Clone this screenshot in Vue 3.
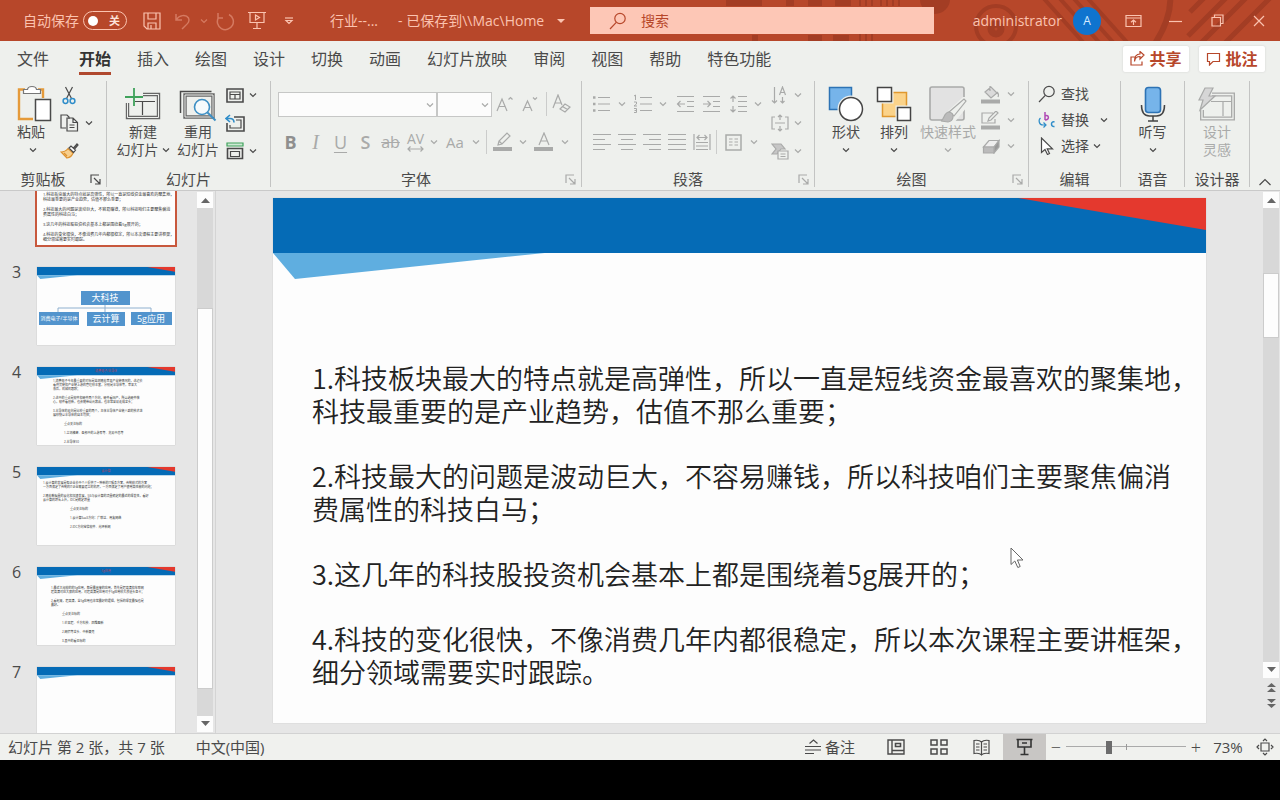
<script setup>
import { h, ref } from 'vue'

const shapes = {
  save: [18, 18, '<path d="M1 1h16v16H4l-3-3z M5 1v6h8V1 M5 17v-6h8v6 M8 13v4"/>'],
  undo: [18, 18, '<path d="M2 2v6h6 M2 8C5 3 12 2 14.500 6c2 4-1.500 6-6.500 11" stroke-width="1.500"/>'],
  redo: [20, 20, '<path d="M3 2v5h5 M3.500 6.500A8 8 0 1 0 14 3.500" stroke-width="1.500"/>'],
  present: [20, 19, '<path d="M1 1.500h18 M3 1.500v10h14v-10 M10 11.500v6 M6 17.500h8"/><path d="M8.500 4l4 2.500-4 2.500z"/>'],
  more: [10, 8, '<path d="M1 1h8"/><path d="M2 3.500l3 3 3-3z"/>'],
  caret: [10, 6, '<path d="M1 1h8L5 5z" fill="currentColor" stroke="none"/>'],
  chev: [8, 6, '<path d="M1 1.500l3 3 3-3"/>'],
  up: [14, 8, '<path d="M1.500 7L7 1.500 12.500 7"/>'],
  search: [18, 18, '<circle cx="11" cy="6.500" r="5.200"/><path d="M7.300 10.400L1 17"/>'],
  ribbonOpts: [17, 14, '<path d="M1 1.500h15v11H1z M1 4h15 M8.500 11V6 M6 8.200L8.500 6 11 8.200"/>'],
  min: [13, 12, '<path d="M0 6.500h13"/>'],
  restore: [13, 13, '<path d="M1 3.500h8.500V12H1z M3.500 3.500V1H12v8.500H9.500"/>'],
  close: [12, 12, '<path d="M1 1l10 10M11 1L1 11"/>'],
  share: [15, 15, '<path d="M5 6H1v8h11v-3.500 M4.500 10.500C5 7 7 5.500 10 5.500V8l4-4-4-3.500V3C6.500 3 4.500 6 4.500 10.500z"/>'],
  comment: [15, 14, '<path d="M1.500 1.500h12v8H7l-3.500 3.500V9.500h-2z"/>'],
  paste: [36, 38, '<path d="M8 4.500H2V34h14 M21 4.500h5V13" stroke="#e59a3a" stroke-width="2.400"/><path d="M6.500 8.500V4.500h4c.500-4 8.500-4 9 0h4v4z" fill="#fff" stroke="#777"/><path d="M18.500 14.500h15v21h-15z" fill="#fff" stroke="#4a4a4a" stroke-width="1.500"/>'],
  cut: [14, 19, '<path d="M3.500 1l6 11.500M10.500 1l-6 11.500"/><g stroke="#2f8dc9" stroke-width="1.500"><circle cx="3.500" cy="15" r="2.400"/><circle cx="10.500" cy="15" r="2.400"/></g>'],
  copy: [19, 18, '<path d="M6 14H1V1h6l2 2v2"/><path d="M7 4h6l4.500 4.500V17H7z M13 4v4.500h4.500 M9.500 11h5 M9.500 13.500h5"/>'],
  brush: [19, 16, '<path d="M1 9c3 0 5-1 7-3.500l5 4.500c-1 3-3 4.500-6 5z" fill="#f7cf8e" stroke="#dd9230"/><path d="M9 5l2-2 4.500 4-2 2.500z M13.500 5l3.500-4 1 1-3.500 4" fill="#fff"/><path d="M4 10l3 3" stroke="#dd9230"/>'],
  newSlide: [38, 36, '<path d="M19 8.500h15.500v23h-31V17" stroke="#666" stroke-width="3.400"/><path d="M19 8.500h15.500v23h-31V17" stroke="#eef0ed" stroke-width="1"/><path d="M11 15.500h20 M18.500 15.500V29"/><path d="M10 2v18 M1 11h18" stroke="#3fa25b" stroke-width="1.800"/>'],
  reuse: [38, 36, '<path d="M1.500 27V5.500h31" stroke-width="1.500"/><path d="M6 9h28v22H6z" stroke="#666" stroke-width="3.400"/><path d="M6 9h28v22H6z" stroke="#eef0ed" stroke-width="1"/><circle cx="23" cy="21" r="7.500" fill="#f5fafc" stroke="#3d8fc4" stroke-width="1.600"/><path d="M28.500 26.500l8 8" stroke="#3d8fc4" stroke-width="2"/>'],
  layout: [18, 15, '<path d="M1 1h16v13H1z" stroke-width="1.600"/><path d="M4 4h10v7H4z M4 6.500h10 M9 6.500V11"/>'],
  reset: [20, 18, '<path d="M9 3h10v14H2V9" stroke-width="1.600"/><path d="M11 6h5v8H5v-3"/><path d="M5 1L1 4.500 5 8 M1 4.500h4c3 0 4 2 4 4" stroke="#2f8dc9" stroke-width="1.600"/>'],
  section: [18, 18, '<path d="M1 1h16v3H1z" stroke="#3fa25b" fill="#cfe9d5"/><path d="M1.500 6.500h15v10h-15z" stroke-width="1.600"/><path d="M4.500 9.500h9v5h-9z"/>'],
  clear: [20, 20, '<path d="M1 14L6 1l4 10 M3 9h6"/><path d="M8 15l5-5 5 3-5 5z M10.500 12.500l5 3" fill="#eef0ed"/>'],
  grow: [17, 16, '<path d="M1 15L6 3l5 12 M3 10.500h6 M12.500 3.500l2-2 2 2"/>'],
  shrink: [16, 16, '<path d="M1 15L5.500 5l4.500 10 M2.700 11.500h5.600 M11 1.500l2 2 2-2"/>'],
  tracking: [17, 6, '<path d="M1 3h15 M3.500 .5L1 3l2.500 2.500 M13.500 .5L16 3l-2.500 2.500"/>'],
  pen: [20, 20, '<path d="M5 13l1-4 8-8 3 3-8 8z M6 9l3 3"/><path d="M0 17h19" stroke-width="4"/>'],
  fontColor: [20, 20, '<path d="M5 13L10 1l5 12 M6.800 9h6.400"/><path d="M0 17h19" stroke-width="4"/>'],
  bullets: [19, 18, '<path d="M6 2.500h12M6 9h12M6 15.500h12"/><path d="M1 2.500h2.500M1 9h2.500M1 15.500h2.500" stroke-width="2.600"/>'],
  numbers: [19, 20, '<path d="M7 3.500h12M7 10h12M7 16.500h12"/><path d="M1 2l1.500-1v5 M1 8h2.500v2L1 12h3 M1 14.500h2.500v4H1 M1.500 16.500h2" stroke-width="1"/>'],
  outdent: [19, 18, '<path d="M1 1.500h17M11 6.500h7M11 11.500h7M1 16.500h17 M9 9H1.500 M4.500 6L1.500 9l3 3"/>'],
  indent: [19, 18, '<path d="M1 1.500h17M11 6.500h7M11 11.500h7M1 16.500h17 M1 9h7.500 M5.500 6l3 3-3 3"/>'],
  spacing: [19, 18, '<path d="M9 1.500h9M9 6.500h9M9 11.500h9M9 16.500h9 M4 1v6 M1.500 3.500L4 1l2.500 2.500 M4 11v6 M1.500 14.500L4 17l2.500-2.500"/>'],
  left: [18, 18, '<path d="M0 1.500h18M0 6.500h12M0 11.500h18M0 16.500h12"/>'],
  center: [18, 18, '<path d="M0 1.500h18M3 6.500h12M0 11.500h18M3 16.500h12"/>'],
  right: [18, 18, '<path d="M0 1.500h18M6 6.500h12M0 11.500h18M6 16.500h12"/>'],
  justify: [18, 18, '<path d="M0 1.500h18M0 6.500h18M0 11.500h18M0 16.500h18"/>'],
  distribute: [18, 18, '<path d="M1 1v16M17 1v16M3 9.500h12M3 13h12M3 16.500h12 M4 4.500h10 M6.500 2L4 4.500 6.500 7 M11.500 2L14 4.500 11.500 7"/>'],
  columns: [17, 17, '<path d="M1 1h15v15H1z" stroke-width="1.500"/><path d="M4 5h3.500M4 8h3.500M4 11h3.500M9.500 5H13M9.500 8H13M9.500 11H13"/>'],
  textDir: [18, 18, '<path d="M3.500 1v16 M1 14.500L3.500 17 6 14.500 M8.500 9l3-8 3 8 M9.500 6.500h4 M11.500 11v6 M9.500 15l2 2 2-2"/>'],
  vAlign: [18, 18, '<path d="M4 3H1v12h3 M14 3h3v12h-3 M4 9h10 M9 1v5 M7 3l2-2 2 2 M9 12v5 M7 15l2 2 2-2"/>'],
  smart: [18, 17, '<path d="M1 1h9l4 5h-4l-4 5H1l4-5z" fill="#c6c6c6"/><path d="M7 8h10v8H7z M9.500 11h5M9.500 13.500h5" fill="#eef0ed"/>'],
  shapes: [36, 36, '<path d="M1.500 1.500h22v22h-22z" fill="#76b4ea" stroke="#2d73b5" stroke-width="1.500"/><circle cx="23" cy="23" r="13.500" fill="#eef0ed" stroke="none"/><circle cx="23" cy="23" r="11.500" fill="#fff" stroke="#444" stroke-width="1.500"/>'],
  arrange: [36, 36, '<path d="M6.500 6.500h24v24h-24z" fill="#fbd38a" stroke="#e0982f" stroke-width="1.500"/><g stroke="#eef0ed" stroke-width="4"><path d="M1.500 1.500h14v14h-14z M21.500 21.500h13v13h-13z"/></g><g fill="#fff" stroke="#444" stroke-width="1.500"><path d="M1.500 1.500h14v14h-14z M21.500 21.500h13v13h-13z"/></g>'],
  quick: [38, 38, '<path d="M3 2h30q2 0 2 2v29q0 2-2 2H3q-2 0-2-2V4q0-2 2-2z" stroke-width="1.600" fill="#e2e2e2"/><path d="M11 38h14l13-16V12h-4L18 27z" fill="#eef0ed" stroke="none"/><path d="M20 27L35 14l2 2-12 15z" fill="#eef0ed"/><path d="M12 36c3-1 3-9 8-9 6 1 5 9-1 10z" fill="#bbb"/>'],
  fill: [20, 19, '<path d="M4 7l6-5 6 6-6 5z M9 6V1 M16 7c2 2 2 3 1 5" fill="#dadada"/><path d="M0 16.500h19" stroke-width="4"/>'],
  outline: [20, 19, '<path d="M12 2H1v10h13V8 M7 10l1-3 7-7 2 2-7 7z"/><path d="M0 16.500h19" stroke-width="4"/>'],
  effect: [18, 15, '<path d="M1.500 8L7 1.500h10L12 8z" fill="#eee"/><path d="M12 8l5-6.500V8l-5 6z" fill="#999"/><path d="M1.500 8H12v6H1.500z" fill="#bbb"/>'],
  replace: [18, 18, '<path d="M7 1v8 M7 5c4-2 5 4 0 4" stroke="#b04ab5" stroke-width="1.500"/><path d="M16.500 11c-4-1.500-4 5.500 0 4.500" stroke="#2f8dc9" stroke-width="1.500"/><path d="M2.500 7C0 9 1 14 5 14H8 M5.500 11.500L8 14l-2.500 2.500" stroke="#2f8dc9"/>'],
  pointer: [13, 18, '<path d="M1 1v14.500l3.500-3 2.500 5 2-1-2.300-4.700H12z" fill="#fff"/>'],
  mic: [26, 36, '<rect x="5.500" y="1.500" width="15" height="25" rx="3" fill="#76b4ea" stroke="#2d73b5" stroke-width="1.600"/><path d="M1.500 19c0 7 3 11 8 11h7c5 0 8-4 8-11 M13 30v5 M8 35h10" stroke="#444" stroke-width="1.500"/>'],
  designer: [38, 34, '<path d="M14 7.500h21v24H4V23" stroke-width="4"/><path d="M14 7.500h21v24H4V23" stroke="#eef0ed" stroke-width="1.300"/><path d="M13 14.500h20 M25 14.500V29"/><path d="M7 1h8l-4 8h6L2 23l3-10H1z" fill="#d6d6d6"/>'],
  launcher: [11, 11, '<path d="M1 9V1h8 M4 4l5.500 5.500 M10 5v5H5"/>'],
  notes: [18, 16, '<path d="M5.500 4.500L9.500 1l4 3.500 M1 7.500h16 M1 11h16 M1 14.500h9"/>'],
  normal: [18, 16, '<path d="M1 1h16v14H1z M5 1v14 M5 11.500h12" stroke-width="1.400"/><path d="M8.500 4.500h5v3h-5z" stroke-width="1.600"/>'],
  sorter: [18, 16, '<path d="M1 1h6v5H1z M11 1h6v5h-6z M1 10h6v5H1z M11 10h6v5h-6z" stroke-width="1.500"/>'],
  reading: [17, 17, '<path d="M8.500 3C6.500 1 4 1 1 1.500v13c3-.5 6-.5 7.500 1.500 1.500-2 4.500-2 7.500-1.500v-13c-3-.5-5.500-.5-7.500 1.500zV16 M3 5h3.500M3 8h3.500M3 11h3.500M10.500 5H14M10.500 8H14M10.500 11H14"/>'],
  show: [17, 18, '<path d="M.5 1.500h16 M2 1.500V9h13V1.500 M8.500 9v7.500 M4.500 16.500h8 M6 5h5" stroke-width="1.600"/>'],
  fit: [18, 18, '<path d="M5 5h8v8H5z M7 3l2-2 2 2 M7 15l2 2 2-2 M3 7L1 9l2 2 M15 7l2 2-2 2"/>'],
  triUp: [9, 6, '<path d="M0 6l4.500-5L9 6z" fill="currentColor" stroke="none"/>'],
  triDown: [9, 6, '<path d="M0 0l4.500 5L9 0z" fill="currentColor" stroke="none"/>'],
  dblUp: [9, 10, '<path d="M0 5l4.500-4L9 5z M0 10l4.500-4L9 10z" fill="currentColor" stroke="none"/>'],
  dblDown: [9, 10, '<path d="M0 0l4.500 4L9 0z M0 5l4.500 4L9 5z" fill="currentColor" stroke="none"/>']
}

const Icon = (props) => {
  const [w, hgt, body] = shapes[props.n]
  return h('svg', {
    width: w, height: hgt, viewBox: `0 0 ${w} ${hgt}`, fill: 'none',
    stroke: 'currentColor', 'stroke-width': 1.2, 'aria-hidden': 'true', innerHTML: body
  })
}
Icon.props = ['n']

const Deco = () => h('svg', {
  viewBox: '0 0 934 525', width: '100%', 'aria-hidden': 'true',
  innerHTML: '<path d="M0 0h934v55H0z" fill="#056bb6"/><path d="M746 0h188v32z" fill="#e4392e"/><path d="M0 55h272L22 81z" fill="#5faee0"/>'
})

const tabs = ['文件', '开始', '插入', '绘图', '设计', '切换', '动画', '幻灯片放映', '审阅', '视图', '帮助', '特色功能']
const zoom = ref(35)

const body = [
  ['1.科技板块最大的特点就是高弹性，所以一直是短线资金最喜欢的聚集地，', '科技最重要的是产业趋势，估值不那么重要；'],
  ['2.科技最大的问题是波动巨大，不容易赚钱，所以科技咱们主要聚焦偏消', '费属性的科技白马；'],
  ['3.这几年的科技股投资机会基本上都是围绕着5g展开的；'],
  ['4.科技的变化很快，不像消费几年内都很稳定，所以本次课程主要讲框架，', '细分领域需要实时跟踪。']
]

const slides = [
  { no: 2, kind: 'current', paras: body },
  { no: 3, kind: 'org', paras: [] },
  {
    no: 4, kind: 'four', title: '消费电子/半导体', paras: [
      ['1.消费电子今年最重要的对标是监测随着苹果产业链情况的，这边去', '看供货链和产业链上游的管理较丰富，分别是半导体等，苹果大', '涨后，机械机跟踪；'],
      ['2.这中的重点是软件和硬件两个方向，硬件看国产，所以选硬件核', '心，软件看创新，也会随带动元器品，也非常容易走成龙头；'],
      ['3.半导体的走向是比较重要的两个，主体半导体产业链人群的技术进', '展较快以半导体的自主可控；']
    ], sub: ['重点关注标的', '1.立讯精密、圣邦中的上游军等、兆易中芯等', '2.半导体50']
  },
  {
    no: 5, kind: 'five', title: '云计算', paras: [
      ['1.云计算的发展是帮企业去中个人提供了一种新的IT服务方案，传统模式的方案', '一方面满足了传统的IT企业需要建立的机房，一方面满足了用户使用高性能的问题；'],
      ['2.随着数据量的云化和加速发展，5G与云计算的流量确定的最近的爆发性，看好', '云计算的增长上升，IDC是确定增量']
    ], sub: ['重点关注标的', '1.云计算SaaS方向：广联达、用友网络', '2.IDC方向宝信软件、光环新网']
  },
  {
    no: 6, kind: 'six', title: '5g应用', paras: [
      ['1.最近大规模的的5g应用，都是最直接的应用，首先是超高清和车联网', '超高清对应大屏的应用，对超高清是应用对于5g应用较大渗透头显卡；'],
      ['2.看起来，超高清，全5g应用也非常最好的逻辑，包括的爆发最强也是', '最好。']
    ], sub: ['重点关注标的', '1.芒果超、千方科技、四维图新', '2.网宿等龙头、中新赛克', '3.其中的看见标的']
  },
  { no: 7, kind: 'blank', paras: [] }
]
</script>

<template>
  <div class="screen">
    <header class="titlebar">
      <svg class="pattern" width="600" height="41" viewBox="0 0 600 41" aria-hidden="true">
        <g fill="none" stroke="#a33d24">
          <path d="M46 3h36M106 3h8M128 3h14M155 3h16" stroke-width="6" />
          <path d="M180 0v6M186 0v6M192 0v6M201 0v6M207 0v6M213 0v6M219 0v6M180 34v7M186 34v7M192 34v7" stroke-width="2" />
          <path d="M72 38h6M128 38h14M153 38h16" stroke-width="6" />
          <circle cx="316" cy="26" r="20" stroke-width="4" />
          <circle cx="316" cy="29" r="5" stroke-width="7" />
          <path d="M358-8l52 58M374-8l52 58M388-8l52 58M402-8l52 58" stroke-width="4" />
          <path d="M490-8c2 18-4 36-18 56" stroke-width="6" />
          <path d="M528-6l-18 18M550-6l-42 42M570-6l-50 50M594-6l-50 50" stroke-width="5" />
        </g>
        <circle cx="255" cy="-1" r="15" fill="#a33d24" />
      </svg>
      <div class="tb-left">
        <label class="autosave">自动保存
          <span class="toggle"><input type="checkbox" aria-label="自动保存"><i></i>关</span>
        </label>
        <button class="w32" aria-label="保存"><Icon n="save" /></button>
        <button class="w30 dim" aria-label="撤消"><Icon n="undo" /></button>
        <button class="w12 dim" aria-label="撤消选项"><Icon n="chev" /></button>
        <button class="w30 dim" aria-label="重复"><Icon n="redo" /></button>
        <button class="w34" aria-label="从头开始"><Icon n="present" /></button>
        <button class="w30" aria-label="自定义快速访问工具栏"><Icon n="more" /></button>
        <span class="docname">行业--...</span>
        <button class="saved">-  已保存到\\Mac\Home <Icon n="caret" /></button>
      </div>
      <label class="searchbox"><Icon n="search" /><input type="text" placeholder="搜索" aria-label="搜索"></label>
      <div class="tb-right">
        <span>administrator</span>
        <button class="avatar">A</button>
        <button class="w42" aria-label="功能区显示选项"><Icon n="ribbonOpts" /></button>
        <button class="w42" aria-label="最小化"><Icon n="min" /></button>
        <button class="w42" aria-label="还原"><Icon n="restore" /></button>
        <button class="w42" aria-label="关闭"><Icon n="close" /></button>
      </div>
    </header>

    <nav class="tabs">
      <button v-for="t in tabs" :key="t" class="tab" :class="{ active: t === '开始', file: t === '文件' }">{{ t }}</button>
      <span class="grow"></span>
      <button class="action"><Icon n="share" />共享</button>
      <button class="action"><Icon n="comment" />批注</button>
    </nav>

    <section class="ribbon">
      <div class="group">
        <div class="gbody clip">
          <button class="big start w36"><Icon n="paste" /><span>粘贴</span><Icon n="chev" /></button>
          <div class="rows">
            <div><button class="w32" aria-label="剪切"><Icon n="cut" /></button></div>
            <div><button class="w32" aria-label="复制"><Icon n="copy" /></button><button class="w12" aria-label="复制选项"><Icon n="chev" /></button></div>
            <div><button class="w32" aria-label="格式刷"><Icon n="brush" /></button></div>
          </div>
        </div>
        <div class="glabel"><span>剪贴板</span><button class="launch" aria-label="剪贴板设置"><Icon n="launcher" /></button></div>
      </div>

      <div class="group">
        <div class="gbody slidesg">
          <button class="big w56"><Icon n="newSlide" /><span>新建</span><span class="inline">幻灯片 <Icon n="chev" /></span></button>
          <button class="big w54"><Icon n="reuse" /><span>重用</span><span>幻灯片</span></button>
          <div class="rows">
            <div><button class="w25" aria-label="版式"><Icon n="layout" /></button><button class="w12" aria-label="版式选项"><Icon n="chev" /></button></div>
            <div><button class="w25" aria-label="重置"><Icon n="reset" /></button></div>
            <div><button class="w25" aria-label="节"><Icon n="section" /></button><button class="w12" aria-label="节选项"><Icon n="chev" /></button></div>
          </div>
        </div>
        <div class="glabel"><span>幻灯片</span></div>
      </div>

      <div class="group">
        <div class="gbody fontg off">
          <div class="line">
            <label class="combo wide"><select disabled aria-label="字体"><option></option></select><Icon n="chev" /></label>
            <label class="combo"><select disabled aria-label="字号"><option></option></select><Icon n="chev" /></label>
            <button class="w25" aria-label="增大字号"><Icon n="grow" /></button>
            <button class="w25" aria-label="减小字号"><Icon n="shrink" /></button>
            <i class="sep"></i>
            <button class="w25" aria-label="清除格式"><Icon n="clear" /></button>
          </div>
          <div class="line">
            <button class="w25 t bold">B</button><button class="w25 t ital">I</button><button class="w25 t under">U</button>
            <button class="w25 t semi">S</button><button class="w25 t strike">ab</button>
            <button class="w25 av">AV<Icon n="tracking" /></button><button class="w12" aria-label="字符间距选项"><Icon n="chev" /></button>
            <button class="w30 aa">Aa</button><button class="w12" aria-label="大小写选项"><Icon n="chev" /></button>
            <i class="sep"></i>
            <button class="w28" aria-label="突出显示"><Icon n="pen" /></button><button class="w12" aria-label="突出显示选项"><Icon n="chev" /></button>
            <button class="w30" aria-label="字体颜色"><Icon n="fontColor" /></button><button class="w12" aria-label="字体颜色选项"><Icon n="chev" /></button>
          </div>
        </div>
        <div class="glabel off"><span>字体</span><button class="launch" aria-label="字体设置"><Icon n="launcher" /></button></div>
      </div>

      <div class="group">
        <div class="gbody parag off">
          <div class="lines">
            <div class="line">
              <button class="w25" aria-label="项目符号"><Icon n="bullets" /></button><button class="w16" aria-label="项目符号选项"><Icon n="chev" /></button>
              <button class="w25" aria-label="编号"><Icon n="numbers" /></button><button class="w16" aria-label="编号选项"><Icon n="chev" /></button>
              <button class="w28" aria-label="减少缩进"><Icon n="outdent" /></button>
              <button class="w25" aria-label="增加缩进"><Icon n="indent" /></button>
              <button class="w28" aria-label="行距"><Icon n="spacing" /></button><button class="w12" aria-label="行距选项"><Icon n="chev" /></button>
            </div>
            <div class="line">
              <button v-for="a in ['left', 'center', 'right', 'justify', 'distribute']" :key="a" class="w25" :aria-label="a"><Icon :n="a" /></button>
              <i class="sep tight"></i>
              <button class="w30" aria-label="分栏"><Icon n="columns" /></button><button class="w12" aria-label="分栏选项"><Icon n="chev" /></button>
            </div>
          </div>
          <div class="rows">
            <div v-for="a in ['textDir', 'vAlign', 'smart']" :key="a"><button class="w20" :aria-label="a"><Icon :n="a" /></button><button class="w16" :aria-label="a + ' 选项'"><Icon n="chev" /></button></div>
          </div>
        </div>
        <div class="glabel off"><span>段落</span><button class="launch" aria-label="段落设置"><Icon n="launcher" /></button></div>
      </div>

      <div class="group">
        <div class="gbody drawg">
          <button class="big w48"><Icon n="shapes" /><span>形状</span><Icon n="chev" /></button>
          <button class="big w48"><Icon n="arrange" /><span>排列</span><Icon n="chev" /></button>
          <button class="big w60 off"><Icon n="quick" /><span>快速样式</span><Icon n="chev" /></button>
          <div class="rows short off">
            <div v-for="a in ['fill', 'outline', 'effect']" :key="a"><button class="w25" :aria-label="a"><Icon :n="a" /></button><button class="w16" :aria-label="a + ' 选项'"><Icon n="chev" /></button></div>
          </div>
        </div>
        <div class="glabel off"><span>绘图</span><button class="launch" aria-label="绘图设置"><Icon n="launcher" /></button></div>
      </div>

      <div class="group">
        <div class="gbody">
          <div class="rows short edit">
            <div><button><Icon n="search" /><span>查找</span></button></div>
            <div><button><Icon n="replace" /><span>替换</span></button><button class="w30" aria-label="替换选项"><Icon n="chev" /></button></div>
            <div><button><Icon n="pointer" /><span>选择</span></button><button class="w16" aria-label="选择选项"><Icon n="chev" /></button></div>
          </div>
        </div>
        <div class="glabel"><span>编辑</span></div>
      </div>

      <div class="group">
        <div class="gbody mid"><button class="big w48"><Icon n="mic" /><span>听写</span><Icon n="chev" /></button></div>
        <div class="glabel"><span>语音</span></div>
      </div>

      <div class="group">
        <div class="gbody mid"><button class="big w48 off"><Icon n="designer" /><span>设计</span><span>灵感</span></button></div>
        <div class="glabel"><span>设计器</span></div>
      </div>
      <div class="collapse"><button aria-label="折叠功能区"><Icon n="up" /></button></div>
    </section>

    <main class="work">
      <aside class="thumbs">
        <ol class="list">
          <li v-for="s in slides" :key="s.no">
            <span class="no">{{ s.no }}</span>
            <div class="thumb" :class="s.kind">
              <Deco class="deco" />
              <span v-if="s.title" class="ttitle">{{ s.title }}</span>
              <svg v-if="s.kind === 'org'" class="chart" viewBox="0 0 138 78">
                <path d="M68 38v7M21 45v-4h93v4" fill="none" stroke="#8fb0cf" />
                <g fill="#5294cd"><path d="M44 24h49v14H44zM2 45h40v13H2zM50 45h38v14H50zM94 45h41v13H94z" /></g>
                <g fill="#fff" text-anchor="middle" font-size="9">
                  <text x="68" y="34">大科技</text><text x="69" y="55">云计算</text><text x="114" y="55">5g应用</text>
                  <text x="22" y="53" font-size="5">消费电子/半导体</text>
                </g>
              </svg>
              <div v-else class="ttext">
                <p v-for="(p, i) in s.paras" :key="i"><span v-for="l in p" :key="l">{{ l }}</span></p>
                <p v-for="l in s.sub || []" :key="l" class="sub">{{ l }}</p>
              </div>
            </div>
          </li>
        </ol>
        <div class="scroll">
          <button aria-label="向上滚动"><Icon n="triUp" /></button>
          <div class="track"><i class="handle low"></i></div>
          <button aria-label="向下滚动"><Icon n="triDown" /></button>
        </div>
      </aside>
      <section class="stage">
        <article class="slide">
          <Deco class="deco" />
          <div class="stext">
            <p v-for="(p, i) in body" :key="i"><span v-for="l in p" :key="l">{{ l }}</span></p>
          </div>
          <svg class="cursor" width="14" height="22" viewBox="0 0 14 22" aria-hidden="true"><path d="M1 1v16.500l3.800-3.500 3 6.500 2.400-1-2.800-6.500H13z" fill="#fff" stroke="#666" /></svg>
        </article>
      </section>
      <div class="scroll right">
        <button aria-label="向上滚动"><Icon n="triUp" /></button>
        <div class="track"><i class="handle high"></i></div>
        <button aria-label="向下滚动"><Icon n="triDown" /></button>
        <button class="plain" aria-label="上一张幻灯片"><Icon n="dblUp" /></button>
        <button class="plain" aria-label="下一张幻灯片"><Icon n="dblDown" /></button>
      </div>
    </main>

    <footer class="status">
      <span>幻灯片 第 2 张，共 7 张</span>
      <button class="lang">中文(中国)</button>
      <span class="grow"></span>
      <button class="notes"><Icon n="notes" />备注</button>
      <button class="view" aria-label="普通视图"><Icon n="normal" /></button>
      <button class="view" aria-label="幻灯片浏览"><Icon n="sorter" /></button>
      <button class="view" aria-label="阅读视图"><Icon n="reading" /></button>
      <button class="view on" aria-label="幻灯片放映"><Icon n="show" /></button>
      <button class="step" aria-label="缩小">−</button>
      <input v-model="zoom" type="range" min="0" max="100" aria-label="缩放">
      <button class="step" aria-label="放大">+</button>
      <button class="pct">73%</button>
      <button class="w30" aria-label="适应窗口"><Icon n="fit" /></button>
    </footer>
  </div>
</template>

<style>
body { margin: 0; background: #000; }
</style>

<style scoped>
* { box-sizing: border-box; }
.screen { height: 100vh; min-height: 600px; padding-bottom: 40px; display: flex; flex-direction: column; background: #000; color: #4a4a4a; font: 14px/20px "Open Sans", "Noto Sans CJK SC", sans-serif; overflow: hidden; }
button { border: 0; padding: 0; background: none; color: inherit; font: inherit; display: inline-flex; align-items: center; justify-content: center; flex: none; white-space: nowrap; }
svg { display: block; flex: none; }
p, ol { margin: 0; padding: 0; list-style: none; }
.grow { flex: 1; }
.w12 { width: 12px; } .w16 { width: 16px; } .w20 { width: 20px; } .w25 { width: 25px; } .w28 { width: 28px; } .w30 { width: 30px; }
.w32 { width: 32px; } .w34 { width: 34px; } .w36 { width: 36px; } .w42 { width: 42px; } .w48 { width: 48px; } .w54 { width: 54px; } .w56 { width: 56px; } .w60 { width: 60px; }
.off { color: #a9aaa9; }

.titlebar { position: relative; height: 41px; flex: none; display: grid; grid-template-columns: 590fr 344fr 346fr; align-items: center; background: #b7472a; color: #fbc3b0; }
.pattern { position: absolute; right: 0; top: 0; }
.tb-left, .tb-right, .searchbox { position: relative; display: flex; align-items: center; min-width: 0; white-space: nowrap; }
.tb-left { padding-left: 23px; }
.autosave { display: flex; align-items: center; gap: 4px; margin-right: 9px; }
.toggle { position: relative; width: 44px; height: 19px; border: 1px solid #fbc3b0; border-radius: 10px; display: flex; align-items: center; justify-content: flex-end; padding-right: 6px; font-size: 11px; font-weight: 700; color: #fde3da; }
.toggle input { position: absolute; inset: 0; margin: 0; opacity: 0; }
.toggle i { position: absolute; left: 4px; width: 10px; height: 10px; border-radius: 50%; background: #fff; }
.dim { color: #d57a61; }
.docname { margin-left: 26px; }
.saved { margin-left: 20px; gap: 8px; white-space: pre; }
.searchbox { height: 27px; background: #fdc7b6; color: #b7472a; padding-left: 19px; gap: 12px; }
.searchbox input { flex: 1; min-width: 0; border: 0; background: none; font: inherit; color: inherit; outline: 0; }
.searchbox input::placeholder { color: #b7472a; opacity: 1; }
.tb-right { justify-content: flex-end; }
.avatar { width: 28px; height: 28px; margin: 0 11px; border-radius: 50%; background: #0f74cf; color: #d5ebff; font-size: 12px; }

.tabs { height: 35px; flex: none; display: flex; align-items: center; gap: 26px; padding: 0 15px 0 17px; background: #eef0ed; font-size: 16px; }
.tab { position: relative; height: 35px; }
.tab.file { margin-right: 4px; }
.tab.active { font-weight: 700; color: #333; }
.tab.active::after { content: ""; position: absolute; left: 0; right: 0; bottom: 1px; height: 3px; background: #b0492f; }
.action { height: 26px; width: 66px; gap: 4px; background: #fff; color: #b7472a; font-weight: 700; border-radius: 2px; box-shadow: 0 0 2px #ccc; }
.action + .action { margin-left: -16px; }

.ribbon { flex: none; display: grid; grid-template-columns: 107fr 164fr 311fr 233fr 214fr 92fr 64fr 65fr 30fr; background: #eef0ed; border-bottom: 1px solid #c9c9c9; }
.group { min-width: 0; margin: 5px 0 3px; border-right: 1px solid #c3c4c3; display: flex; flex-direction: column; }
.gbody { height: 90px; display: flex; align-items: flex-start; }
.glabel { height: 16px; display: flex; align-items: center; font-size: 15px; line-height: 16px; }
.glabel span { flex: 1; text-align: center; color: #4a4a4a; }
.launch { width: 20px; padding-right: 1px; }
.big { flex-direction: column; justify-content: flex-start; padding-top: 4px; line-height: 18px; }
.big > svg:first-child { height: 38px; }
.big > svg:last-child { margin-top: 6px; }
.big.start { align-items: flex-start; }
.big.start > svg:last-child { margin-left: 12px; }
.big .inline { display: flex; align-items: center; gap: 3px; }
.clip { padding-left: 17px; }
.clip .rows .w12 { margin-left: -2px; }
.rows > div { height: 28px; display: flex; align-items: center; }
.rows.short > div { height: 26px; }
.slidesg { padding-left: 8px; }
.slidesg .rows { margin-left: -3px; }
.fontg { flex-direction: column; padding: 4px 0 0 7px; }
.parag { padding-left: 7px; justify-content: space-between; padding-right: 8px; }
.lines { padding-top: 4px; }
.line { height: 38px; display: flex; align-items: center; }
.combo { position: relative; width: 55px; height: 25px; }
.combo.wide { width: 159px; }
.combo select { appearance: none; width: 100%; height: 100%; border: 1px solid #c6c7c6; border-radius: 0; background: #fcfcfc; opacity: 1; }
.combo svg { position: absolute; right: 3px; top: 10px; }
.sep { width: 1px; height: 24px; margin: 0 2px 0 4px; background: #cbcccb; }
.sep.tight { margin: 0 1px 0 2px; }
.t { font-size: 18px; }
.bold { font-weight: 700; color: #8f8f8f; }
.ital { font-style: italic; font-family: "Liberation Serif", serif; font-size: 20px; }
.under { text-decoration: underline; text-underline-offset: 3px; }
.semi { font-weight: 600; }
.strike { text-decoration: line-through; font-size: 16px; }
.av { flex-direction: column; font-size: 14px; line-height: 14px; }
.aa { font-size: 15px; }
.drawg { padding-left: 7px; }
.edit { padding-left: 8px; }
.edit button:first-child { gap: 4px; }
.edit button:first-child svg { width: 20px; }
.mid { justify-content: center; }
.collapse { display: flex; align-items: flex-end; justify-content: center; padding-bottom: 4px; }

.work { flex: 1; min-height: 0; display: flex; background: #e6e6e6; }
.thumbs { width: 216px; flex: none; display: flex; overflow: hidden; border-right: 1px solid #d4d4d4; }
.list { width: 197px; margin-top: -24px; display: flex; flex-direction: column; gap: 22px; }
.list li { display: flex; height: 78px; flex: none; }
.no { width: 37px; flex: none; padding-left: 12px; font-size: 16px; line-height: 10px; }
.thumb { position: relative; width: 138px; height: 78px; background: #fdfdfd; box-shadow: 0 0 1px #aaa; overflow: hidden; font-size: 3px; line-height: 4px; color: #333; white-space: nowrap; }
.deco { position: absolute; left: 0; top: 0; }
.current { box-shadow: 0 0 0 2px #c8583d; font-size: 4px; line-height: 5px; }
.current .ttext { padding: 25px 0 0 6px; }
.thumb.current p { margin-bottom: 5px; }
.ttext span { display: block; }
.ttext p { margin-bottom: 5px; }
.ttitle { position: absolute; left: 0; right: 0; top: 2px; text-align: center; color: #b8405a; }
.four .ttext { padding: 12px 0 0 16px; }
.five .ttext { padding: 14px 0 0 6px; }
.six .ttext { padding: 19px 0 0 14px; }
.ttext .sub { padding-left: 11px; }
.five .ttext .sub { padding-left: 27px; }
.chart { position: absolute; inset: 0; }
.scroll { width: 16px; margin: 1px 0; flex: none; display: flex; flex-direction: column; background: #d8d8d8; color: #666; }
.scroll button { height: 16px; background: #fdfdfd; }
.scroll .plain { background: #e6e6e6; height: 17px; }
.scroll.right { margin-right: 1px; padding-bottom: 20px; background: linear-gradient(#d8d8d8, #d8d8d8) no-repeat 0 0 / 100% calc(100% - 60px); }
.track { flex: 1; display: flex; flex-direction: column; }
.handle { background: #fdfdfd; border: 1px solid #ccc; }
.low { margin-top: 100px; flex: 0 0 75%; }
.high { margin-top: 65px; flex: 0 0 65px; }
.stage { flex: 1; min-width: 0; padding: 7px 57px 10px 57px; }
.slide { position: relative; height: 100%; background: #fdfdfd; box-shadow: 0 0 1px #bbb; }
.stext { position: relative; padding: 163px 0 0 39px; font-size: 27px; line-height: 33px; font-weight: 350; font-family: "Noto Sans CJK SC", sans-serif; color: #222; white-space: nowrap; }
.stext p { margin-bottom: 32px; }
.stext span { display: block; }
.cursor { position: absolute; left: 79%; top: 349px; }

.status { height: 27px; flex: none; display: flex; align-items: center; padding-left: 8px; background: #f0f1ee; border-top: 1px solid #d2d2d2; font-size: 15px; line-height: 24px; }
.lang { margin-left: 31px; }
.notes { gap: 3px; margin-right: 19px; }
.view { width: 43px; height: 26px; }
.view.on { background: #c8c6c4; color: #333; }
.step { width: 20px; font-size: 18px; font-weight: 300; }
.status input { appearance: none; width: 120px; height: 14px; margin: 0; background: linear-gradient(#999, #999) no-repeat 60px 4px / 1px 6px, linear-gradient(#aaa, #aaa) no-repeat 0 6px / 100% 1px; }
.status input::-webkit-slider-thumb { appearance: none; width: 6px; height: 13px; background: #6c6c6c; }
.pct { width: 44px; }
</style>
